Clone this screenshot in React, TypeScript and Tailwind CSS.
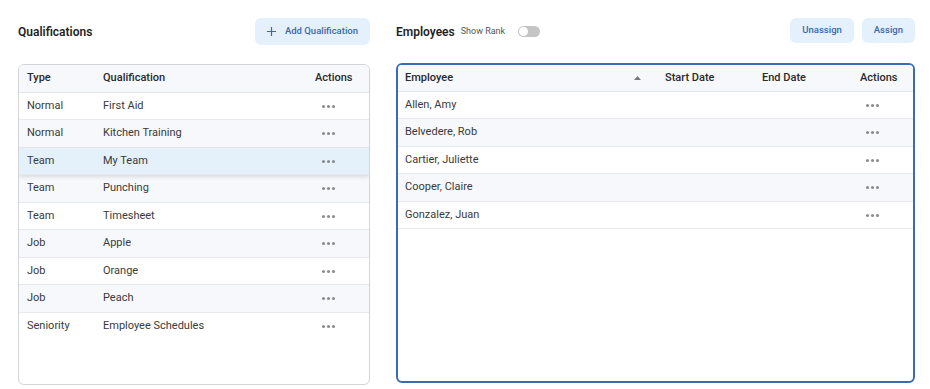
import React from 'react';

const qualifications = [
  { type: 'Normal', name: 'First Aid' },
  { type: 'Normal', name: 'Kitchen Training' },
  { type: 'Team', name: 'My Team', selected: true },
  { type: 'Team', name: 'Punching' },
  { type: 'Team', name: 'Timesheet' },
  { type: 'Job', name: 'Apple' },
  { type: 'Job', name: 'Orange' },
  { type: 'Job', name: 'Peach' },
  { type: 'Seniority', name: 'Employee Schedules' },
];

const employees = ['Allen, Amy', 'Belvedere, Rob', 'Cartier, Juliette', 'Cooper, Claire', 'Gonzalez, Juan'];

const buttonClass =
  'flex items-center rounded-md bg-[#e4f0fb] text-[9.5px] font-medium text-[#3d67ad]';

function Dots() {
  return (
    <span className="flex items-center gap-[2px]">
      <span className="h-[3px] w-[3px] rounded-full bg-[#8a8a8a]" />
      <span className="h-[3px] w-[3px] rounded-full bg-[#8a8a8a]" />
      <span className="h-[3px] w-[3px] rounded-full bg-[#8a8a8a]" />
    </span>
  );
}

// rows alternate 27/28px so the 27.5px rhythm lands on whole pixels
function rowClass(index: number, selected?: boolean) {
  const height = index % 2 === 0 ? 'h-[27px]' : 'h-[28px]';
  if (selected) return `${height} relative z-10 bg-[#e4f1fb] shadow-[0_2px_4px_rgba(0,0,0,0.12)]`;
  return `${height} ${index % 2 === 1 ? 'bg-[#f7f8fc]' : 'bg-white'}`;
}

export default function App() {
  return (
    <div
      className="flex h-[389px] w-[930px] gap-[26px] bg-white pl-[18px] pr-[15px] pt-[18px] text-[#2a2a2a]"
      style={{ fontFamily: 'Roboto, "Noto Sans", sans-serif' }}
    >
      <section className="flex w-[352px] flex-col">
        <header className="flex h-[27px] items-center justify-between">
          <h2 className="text-[12px] font-semibold text-[#1f1f1f]">Qualifications</h2>
          <button className={`${buttonClass} h-[27px] gap-[9px] px-[12px]`}>
            <svg width="9" height="9" viewBox="0 0 9 9" className="text-[#3d67ad]">
              <path d="M4.5 0v9M0 4.5h9" stroke="currentColor" strokeWidth="1.2" />
            </svg>
            Add Qualification
          </button>
        </header>
        <div className="mt-[19px] h-[321px] overflow-hidden rounded-[6px] border border-[#d2d4d8] text-[11px]">
          <div className="flex h-[28px] items-center border-b border-[#e3e5ea] bg-[#f7f8fc] font-medium text-[#2a2a2a]">
            <span className="w-[84px] pl-[8px]">Type</span>
            <span className="flex-1">Qualification</span>
            <span className="w-[54px]">Actions</span>
          </div>
          {qualifications.map((q, i) => (
            <div
              key={q.name}
              className={`flex items-center border-b border-[#e6e8ec] text-[#3a3a3a] last:border-b-0 ${rowClass(i, q.selected)}`}
            >
              <span className="w-[84px] pl-[8px]">{q.type}</span>
              <span className="flex-1">{q.name}</span>
              <span className="flex w-[54px] pl-[7px]">
                <Dots />
              </span>
            </div>
          ))}
        </div>
      </section>

      <section className="flex w-[519px] flex-col">
        <header className="flex h-[27px] items-center justify-between">
          <div className="flex items-center">
            <h2 className="text-[12px] font-semibold text-[#1f1f1f]">Employees</h2>
            <span className="ml-[6px] text-[9px] text-[#555]">Show Rank</span>
            <span className="ml-[13px] flex h-[11px] w-[22px] items-center rounded-full bg-[#c4c4c4] px-[1px]">
              <span className="h-[9px] w-[9px] rounded-full bg-white" />
            </span>
          </div>
          <div className="flex items-center gap-[8px] self-start">
            <button className={`${buttonClass} h-[25px] px-[12px]`}>Unassign</button>
            <button className={`${buttonClass} h-[25px] px-[12px]`}>Assign</button>
          </div>
        </header>
        <div className="mt-[18px] h-[320px] overflow-hidden rounded-[6px] border-2 border-[#3c6ab3] text-[11px]">
          <div className="flex h-[27px] items-center border-b border-[#e3e5ea] bg-[#f7f8fc] font-medium text-[#2a2a2a]">
            <span className="flex-1 pl-[7px]">Employee</span>
            <span className="w-[31px]">
              <svg width="7" height="4" viewBox="0 0 7 4">
                <path d="M0 4L3.5 0L7 4Z" fill="#777" />
              </svg>
            </span>
            <span className="w-[97px]">Start Date</span>
            <span className="w-[98px]">End Date</span>
            <span className="w-[53px]">Actions</span>
          </div>
          {employees.map((name, i) => (
            <div
              key={name}
              className={`flex items-center border-b border-[#e6e8ec] text-[#3a3a3a] ${rowClass(i)}`}
            >
              <span className="flex-1 pl-[7px]">{name}</span>
              <span className="flex w-[53px] pl-[6px]">
                <Dots />
              </span>
            </div>
          ))}
        </div>
      </section>
    </div>
  );
}
